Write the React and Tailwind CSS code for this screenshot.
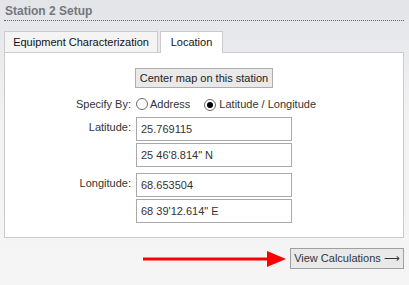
import React from 'react';

const font = { fontFamily: '"Liberation Sans", Arial, sans-serif' };

function Radio({ checked }) {
  return (
    <span className="inline-flex h-[12px] w-[12px] items-center justify-center rounded-full border border-[#6b6b6b] bg-white">
      {checked && <span className="h-[6px] w-[6px] rounded-full bg-black" />}
    </span>
  );
}

function Field({ value }) {
  return (
    <div className="flex h-[24px] w-[156px] items-center border border-[#a9a9a9] bg-white pl-[4px] text-[11px] text-[#333]">
      {value}
    </div>
  );
}

// label column + paired inputs
function CoordRow({ label, values }) {
  return (
    <div className="flex">
      <div className="w-[126px] pt-[4px] text-right text-[11px] leading-[13px] text-[#333]">{label}</div>
      <div className="ml-[5px] flex flex-col gap-[2px]">
        {values.map(v => <Field key={v} value={v} />)}
      </div>
    </div>
  );
}

export default function App() {
  return (
    <div
      className="h-[285px] w-[409px] overflow-hidden bg-[linear-gradient(#e3e4e8,#f3f3f4_120px,#f5f5f5)]"
      style={font}
    >
      <div className="ml-[4px] w-[400px]">
        {/* header */}
        <div className="h-[21px] border-b border-dotted border-[#666] pl-[1px] pt-[4px] text-[12px] font-bold leading-[14px] text-[#74767c]">
          Station 2 Setup
        </div>

        {/* tabs */}
        <div className="mt-[10px] flex gap-[2px]">
          <div className="flex h-[21px] w-[154px] items-center justify-center border border-b-0 border-[#cbcbcb] bg-[#f4f4f5] text-[11px] text-[#111]">
            Equipment Characterization
          </div>
          <div className="relative z-10 mb-[-1px] flex h-[22px] w-[63px] items-center justify-center border border-b-0 border-[#cbcbcb] bg-white text-[11px] text-[#111]">
            Location
          </div>
        </div>

        {/* panel */}
        <div className="h-[186px] border border-[#cbcbcb] bg-white pt-[15px]">
          <div className="flex justify-center">
            <button className="h-[20px] w-[138px] border border-[#adadad] bg-[#e9e9e9] text-[11px] text-[#222]">
              Center map on this station
            </button>
          </div>

          <div className="mt-[8px] flex h-[16px] items-center text-[11px] text-[#333]">
            <div className="w-[126px] text-right">Specify By:</div>
            <div className="ml-[5px] flex items-center">
              <Radio />
              <span className="ml-[2px]">Address</span>
              <span className="ml-[14px]"><Radio checked /></span>
              <span className="ml-[3px]">Latitude / Longitude</span>
            </div>
          </div>

          <div className="mt-[5px] flex flex-col gap-[6px]">
            <CoordRow label="Latitude:" values={['25.769115', '25 46\'8.814" N']} />
            <CoordRow label="Longitude:" values={['68.653504', '68 39\'12.614" E']} />
          </div>
        </div>

        {/* footer */}
        <div className="mt-[10px] flex items-center justify-end">
          <svg width="144" height="18" viewBox="0 0 144 18" className="mr-[3px]">
            <line x1="0" y1="9" x2="126" y2="9" stroke="#ff0000" strokeWidth="3" />
            <polygon points="124,1 143,9 124,17" fill="#ff0000" />
          </svg>
          <button className="h-[21px] w-[114px] border border-[#a0a0a0] bg-[#e9e9e9] text-[11px] text-[#333]">
            View Calculations ⟶
          </button>
        </div>
      </div>
    </div>
  );
}
